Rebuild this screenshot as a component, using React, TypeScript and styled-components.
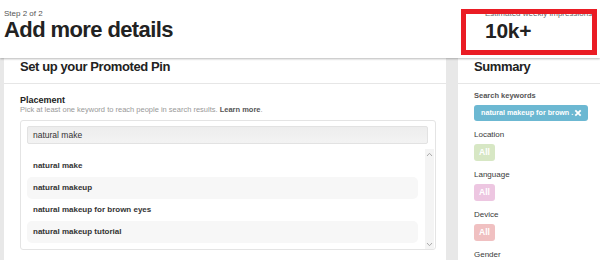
import React from "react";
import styled, { createGlobalStyle } from "styled-components";

const Global = createGlobalStyle`
  html, body { margin: 0; padding: 0; background: #e8e8e8; }
  body { font-family: "Liberation Sans", Arial, sans-serif; }
  * { box-sizing: border-box; }
`;

const Page = styled.div`
  width: 600px;
  height: 260px;
  overflow: hidden;
  background: #e8e8e8;
  display: flex;
  flex-direction: column;
`;

const Header = styled.header`
  position: relative;
  z-index: 2;
  height: 58px;
  flex: none;
  background: #fff;
  box-shadow: 0 1px 2px rgba(0, 0, 0, 0.28);
  display: flex;
  justify-content: space-between;
  padding: 9px 0 0 4px;
`;

const TitleBlock = styled.div`
  display: flex;
  flex-direction: column;
`;

const Step = styled.div`
  font-size: 8px;
  line-height: 9px;
  color: #555;
`;

const PageTitle = styled.h1`
  margin: 0;
  font-size: 22px;
  line-height: 24px;
  letter-spacing: -0.6px;
  font-weight: bold;
  color: #222;
`;

const Impressions = styled.div`
  width: 115px;
  margin-top: -1px;
  display: flex;
  flex-direction: column;
  white-space: nowrap;
`;

const ImpLabel = styled.div`
  font-size: 8px;
  line-height: 11px;
  color: #666;
`;

const ImpValue = styled.div`
  font-size: 21px;
  line-height: 24px;
  letter-spacing: -0.3px;
  font-weight: bold;
  color: #222;
`;

const Highlight = styled.div`
  position: absolute;
  left: 461px;
  top: 9px;
  width: 136px;
  height: 46px;
  border: 5px solid #ea1c24;
  pointer-events: none;
`;

const Main = styled.main`
  flex: 1;
  display: flex;
  gap: 12px;
  padding-left: 4px;
  min-height: 0;
`;

const Panel = styled.section<{ $width: number }>`
  width: ${(p) => p.$width}px;
  flex: none;
  background: #fff;
  display: flex;
  flex-direction: column;
`;

const PanelHead = styled.div`
  height: 26px;
  padding: 1px 16px 0;
  border-bottom: 1px solid #e6e6e6;
  font-size: 13px;
  line-height: 16px;
  letter-spacing: -0.4px;
  font-weight: bold;
  color: #222;
  white-space: nowrap;
`;

const PanelBody = styled.div<{ $top: number }>`
  padding: ${(p) => p.$top}px 0 0 16px;
  display: flex;
  flex-direction: column;
`;

const FieldTitle = styled.div`
  font-size: 9px;
  line-height: 10px;
  font-weight: bold;
  color: #222;
`;

const FieldHint = styled.div`
  font-size: 7.5px;
  line-height: 10px;
  color: #999;
  b {
    color: #555;
  }
`;

const SearchBox = styled.div`
  margin-top: 5px;
  width: 416px;
  height: 130px;
  border: 1px solid #e4e4e4;
  border-radius: 3px;
  padding: 5px 1px 0 6px;
  display: flex;
  flex-direction: column;
`;

const Input = styled.div`
  height: 18px;
  margin-right: 6px;
  background: linear-gradient(#ededed, #f3f3f3);
  border: 1px solid #e2e2e2;
  border-radius: 2px;
  padding-left: 5px;
  font-size: 8.5px;
  line-height: 16px;
  color: #333;
`;

const ListArea = styled.div`
  margin-top: 5px;
  height: 100px;
  display: flex;
  gap: 7px;
`;

const Rows = styled.div`
  flex: 1;
  padding-top: 6px;
  display: flex;
  flex-direction: column;
`;

const Row = styled.div<{ $shaded: boolean }>`
  height: 22px;
  border-radius: 5px;
  background: ${(p) => (p.$shaded ? "#f7f7f7" : "transparent")};
  padding-left: 6px;
  font-size: 8px;
  line-height: 22px;
  font-weight: bold;
  color: #333;
`;

const Scrollbar = styled.div`
  width: 9px;
  background-color: #f4f4f4;
  background-image: radial-gradient(#e6e6e6 0.6px, transparent 0.7px);
  background-size: 2px 2px;
  display: flex;
  flex-direction: column;
  justify-content: space-between;
  align-items: center;
  padding: 3px 0 2px;
`;

const Summary = styled.div`
  display: flex;
  flex-direction: column;
`;

const SumLabel = styled.div<{ $bold?: boolean }>`
  font-size: ${(p) => (p.$bold ? 7.5 : 8)}px;
  line-height: ${(p) => (p.$bold ? 10 : 11)}px;
  font-weight: ${(p) => (p.$bold ? "bold" : "normal")};
  color: ${(p) => (p.$bold ? "#555" : "#3a3a3a")};
`;

const Tag = styled.div<{ $color: string; $width?: number; $height: number; $size: number }>`
  margin: 4px 0 8px;
  align-self: flex-start;
  ${(p) => (p.$width ? `width: ${p.$width}px;` : "")}
  height: ${(p) => p.$height}px;
  border-radius: 3px;
  background: ${(p) => p.$color};
  color: #fff;
  font-weight: bold;
  font-size: ${(p) => p.$size}px;
  line-height: ${(p) => p.$height}px;
  padding: 0 ${(p) => (p.$width ? 0 : 5)}px 0 ${(p) => (p.$width ? 7 : 5)}px;
  white-space: nowrap;
  display: flex;
  align-items: center;
  gap: 1px;
`;

const Chevron = ({ up }: { up?: boolean }) => (
  <svg width="7" height="5" viewBox="0 0 7 5">
    <polyline
      points={up ? "1,4 3.5,1.3 6,4" : "1,1 3.5,3.7 6,1"}
      fill="none"
      stroke="#aaa"
      strokeWidth="1"
    />
  </svg>
);

const CloseX = () => (
  <svg width="8" height="8" viewBox="0 0 8 8">
    <path d="M1.3 1.3 L6.7 6.7 M6.7 1.3 L1.3 6.7" stroke="#fff" strokeWidth="1.8" />
  </svg>
);

const suggestions = [
  "natural make",
  "natural makeup",
  "natural makeup for brown eyes",
  "natural makeup tutorial",
];

const groups = [
  { label: "Location", color: "#d7e7c4" },
  { label: "Language", color: "#edc6e1" },
  { label: "Device", color: "#f0c0c1" },
];

export default function App() {
  return (
    <>
      <Global />
      <Page>
        <Header>
          <TitleBlock>
            <Step>Step 2 of 2</Step>
            <PageTitle>Add more details</PageTitle>
          </TitleBlock>
          <Impressions>
            <ImpLabel>Estimated weekly impressions</ImpLabel>
            <ImpValue>10k+</ImpValue>
          </Impressions>
          <Highlight />
        </Header>
        <Main>
          <Panel $width={442}>
            <PanelHead>Set up your Promoted Pin</PanelHead>
            <PanelBody $top={11}>
              <FieldTitle>Placement</FieldTitle>
              <FieldHint>
                Pick at least one keyword to reach people in search results. <b>Learn more</b>.
              </FieldHint>
              <SearchBox>
                <Input>natural make</Input>
                <ListArea>
                  <Rows>
                    {suggestions.map((s, i) => (
                      <Row key={s} $shaded={i % 2 === 1}>
                        {s}
                      </Row>
                    ))}
                  </Rows>
                  <Scrollbar>
                    <Chevron up />
                    <Chevron />
                  </Scrollbar>
                </ListArea>
              </SearchBox>
            </PanelBody>
          </Panel>
          <Panel $width={142}>
            <PanelHead>Summary</PanelHead>
            <PanelBody $top={7}>
              <Summary>
                <SumLabel $bold>Search keywords</SumLabel>
                <Tag $color="#6cb8d2" $width={114} $height={16} $size={7.2}>
                  natural makeup for brown .<CloseX />
                </Tag>
                {groups.map((g) => (
                  <React.Fragment key={g.label}>
                    <SumLabel>{g.label}</SumLabel>
                    <Tag $color={g.color} $height={17} $size={8.5}>
                      All
                    </Tag>
                  </React.Fragment>
                ))}
                <SumLabel>Gender</SumLabel>
              </Summary>
            </PanelBody>
          </Panel>
        </Main>
      </Page>
    </>
  );
}
